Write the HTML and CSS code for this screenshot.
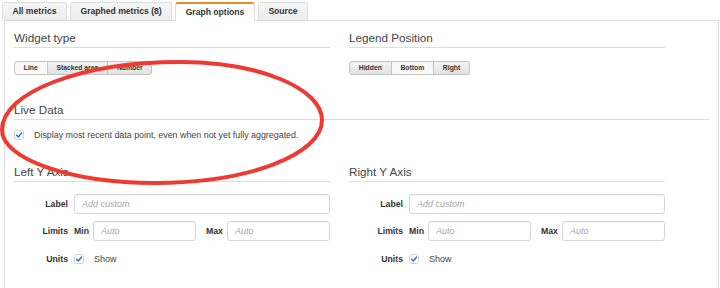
FILE: index.html
```html
<!DOCTYPE html>
<html>
<head>
  <meta charset="utf-8">
  <title>Graph options</title>
  <link rel="stylesheet" href="styles.css">
</head>
<body>
  <div class="tabs">
    <div class="tab">All metrics</div>
    <div class="tab">Graphed metrics (8)</div>
    <div class="tab active">Graph options</div>
    <div class="tab">Source</div>
  </div>

  <div class="panel">
    <div class="row">
      <section class="group">
        <h3>Widget type</h3>
        <div class="btn-group">
          <button class="seg on">Line</button>
          <button class="seg">Stacked area</button>
          <button class="seg">Number</button>
        </div>
      </section>
      <section class="group">
        <h3>Legend Position</h3>
        <div class="btn-group">
          <button class="seg">Hidden</button>
          <button class="seg on">Bottom</button>
          <button class="seg">Right</button>
        </div>
      </section>
    </div>

    <section class="live">
      <h3>Live Data</h3>
      <label class="check-line">
        <svg class="check" width="10" height="10" viewBox="0 0 10 10"><rect x="0.5" y="0.5" width="9" height="9" rx="2" fill="#fff" stroke="#d0d0d0"/><path d="M2.6 5.3 L4.3 7 L7.6 3" fill="none" stroke="#2d6fc0" stroke-width="1.4" stroke-linecap="round" stroke-linejoin="round"/></svg>
        <span>Display most recent data point, even when not yet fully aggregated.</span>
      </label>
    </section>

    <div class="row axes">
      <section class="group">
        <h3>Left Y Axis</h3>
        <div class="field">
          <span class="field-label">Label</span>
          <input class="text-input" type="text" placeholder="Add custom">
        </div>
        <div class="field">
          <span class="field-label">Limits</span>
          <span class="sub">Min</span>
          <input class="text-input" type="text" placeholder="Auto">
          <span class="sub max">Max</span>
          <input class="text-input" type="text" placeholder="Auto">
        </div>
        <div class="field units">
          <span class="field-label">Units</span>
          <svg class="check" width="10" height="10" viewBox="0 0 10 10"><rect x="0.5" y="0.5" width="9" height="9" rx="2" fill="#fff" stroke="#d0d0d0"/><path d="M2.6 5.3 L4.3 7 L7.6 3" fill="none" stroke="#2d6fc0" stroke-width="1.4" stroke-linecap="round" stroke-linejoin="round"/></svg>
          <span class="show">Show</span>
        </div>
      </section>
      <section class="group">
        <h3>Right Y Axis</h3>
        <div class="field">
          <span class="field-label">Label</span>
          <input class="text-input" type="text" placeholder="Add custom">
        </div>
        <div class="field">
          <span class="field-label">Limits</span>
          <span class="sub">Min</span>
          <input class="text-input" type="text" placeholder="Auto">
          <span class="sub max">Max</span>
          <input class="text-input" type="text" placeholder="Auto">
        </div>
        <div class="field units">
          <span class="field-label">Units</span>
          <svg class="check" width="10" height="10" viewBox="0 0 10 10"><rect x="0.5" y="0.5" width="9" height="9" rx="2" fill="#fff" stroke="#d0d0d0"/><path d="M2.6 5.3 L4.3 7 L7.6 3" fill="none" stroke="#2d6fc0" stroke-width="1.4" stroke-linecap="round" stroke-linejoin="round"/></svg>
          <span class="show">Show</span>
        </div>
      </section>
    </div>
  </div>

  <!-- hand drawn highlight over the live data option -->
  <svg class="annotation" width="720" height="288" viewBox="0 0 720 288">
    <path d="M2 130 C2 92 82 62 180 62 C258 62 322 88 322 120 C322 155 247 183 155 183 C71 183 2 159 2 130 Z" fill="none" stroke="#ee3a32" stroke-width="4"/>
  </svg>
</body>
</html>
```

FILE: styles.css
```css
* {
  box-sizing: border-box;
}

html, body {
  margin: 0;
  padding: 0;
  background: #fff;
  font-family: "Liberation Sans", Arial, sans-serif;
  color: #333;
  overflow: hidden;
}

.tabs {
  display: flex;
  align-items: flex-end;
  gap: 3px;
  height: 20px;
  padding: 2px 0 0 2px;
}

.tab {
  height: 18px;
  padding: 0 9.5px;
  border: 1px solid #dcdcdc;
  border-bottom: none;
  border-radius: 3px 3px 0 0;
  background: linear-gradient(#f6f6f6, #ececec);
  font-size: 8.6px;
  font-weight: bold;
  line-height: 17px;
  color: #333;
}

.tab.active {
  position: relative;
  height: 19px;
  margin-bottom: -1px;
  border-top: 2px solid #ef8a2c;
  background: #fff;
  line-height: 16px;
}

.panel {
  width: 715px;
  height: 268px;
  margin-left: 4px;
  padding: 9px 9px 0 9px;
  border: 1px solid #dcdcdc;
  border-bottom: none;
}

.row {
  display: grid;
  grid-template-columns: 316px 316px;
  column-gap: 19px;
}

h3 {
  margin: 0;
  height: 18px;
  padding-bottom: 1px;
  border-bottom: 1px solid #dedede;
  font-size: 11.7px;
  font-weight: normal;
  line-height: 16px;
  color: #444;
}

.btn-group {
  display: flex;
  margin-top: 13px;
}

.seg {
  height: 14px;
  padding: 0 8.8px;
  margin: 0;
  border: 1px solid #c4c4c4;
  border-left: none;
  background: linear-gradient(#f4f4f4, #e2e2e2);
  font-family: inherit;
  font-size: 6.8px;
  font-weight: bold;
  color: #333;
  line-height: 12px;
}

.seg:first-child {
  border-left: 1px solid #c4c4c4;
  border-radius: 3px 0 0 3px;
}

.seg:last-child {
  border-radius: 0 3px 3px 0;
}

.seg.on {
  background: #f9f9f9;
}

.live {
  margin-top: 27px;
}

.check-line {
  display: flex;
  align-items: center;
  gap: 10px;
  height: 10px;
  margin-top: 10px;
  font-size: 8.9px;
  color: #444;
}

.check {
  display: block;
  flex: none;
}

.axes {
  margin-top: 24px;
}

.field {
  display: flex;
  align-items: center;
  gap: 4px;
  height: 20px;
  margin-top: 7px;
}

.axes h3 + .field {
  margin-top: 12px;
}

.field-label {
  width: 54px;
  margin-right: 2px;
  text-align: right;
  font-size: 8.7px;
  font-weight: bold;
  color: #333;
}

.sub {
  font-size: 8.7px;
  font-weight: bold;
  color: #333;
}

.sub.max {
  margin-left: 6px;
}

.text-input {
  flex: 1;
  min-width: 0;
  height: 20px;
  padding: 0 7px;
  border: 1px solid #d6d6d6;
  border-radius: 3px;
  font-family: inherit;
  font-size: 9px;
  box-shadow: inset 0 1px 1px rgba(0,0,0,0.04);
}

.text-input::placeholder {
  font-style: italic;
  color: #a8a8a8;
}

.units {
  gap: 10px;
  margin-top: 8px;
}

.units .field-label {
  margin-right: -4px;
}

.show {
  font-size: 9px;
  color: #444;
}

.annotation {
  position: absolute;
  left: 0;
  top: 0;
  pointer-events: none;
}
```
